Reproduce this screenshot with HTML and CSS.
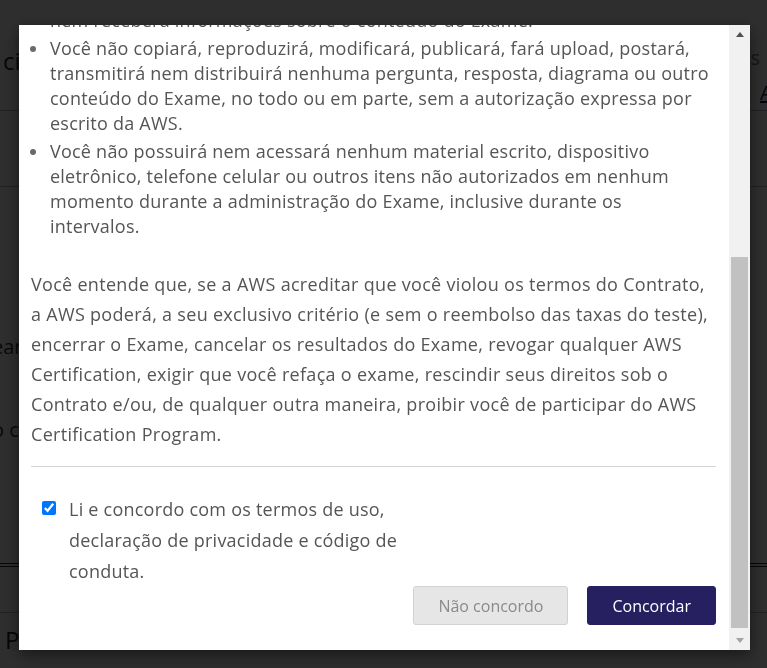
FILE: index.html
```html
<!DOCTYPE html>
<html lang="pt-BR">
<head>
<meta charset="utf-8">
<title>Termos do Exame</title>
<link rel="stylesheet" href="styles.css">
</head>
<body>
<div class="page">
  <header class="page-head">
    <div class="page-title">ciência do exame</div>
    <div class="page-nav">
      <span class="nav-item">Opções</span>
      <a class="nav-link">Ajuda</a>
    </div>
  </header>
  <section class="page-sec sec-a"></section>
  <section class="page-sec sec-b"></section>
  <section class="page-body">
    <p class="bg-line">earlier</p>
    <p class="bg-line">o candidato</p>
  </section>
  <section class="page-rule"></section>
  <footer class="page-foot">Política</footer>
</div>

<div class="backdrop"></div>

<div class="modal" role="dialog">
  <div class="modal-scroll">
    <div class="modal-inner">
      <h4 class="modal-title">Acordo de Confidencialidade do Exame</h4>
      <p class="intro">Antes de iniciar o exame, leia com atenção e aceite os termos a seguir. Ao fazer este exame, você concorda que:</p>
      <ul class="terms">
        <li>Você manterá a confidencialidade do conteúdo do Exame e não buscará<br>nem receberá informações sobre o conteúdo do Exame.</li>
        <li>Você não copiará, reproduzirá, modificará, publicará, fará upload, postará, transmitirá nem distribuirá nenhuma pergunta, resposta, diagrama ou outro conteúdo do Exame, no todo ou em parte, sem a autorização expressa por escrito da AWS.</li>
        <li>Você não possuirá nem acessará nenhum material escrito, dispositivo eletrônico, telefone celular ou outros itens não autorizados em nenhum momento durante a administração do Exame, inclusive durante os intervalos.</li>
      </ul>
      <p class="notice">Você entende que, se a AWS acreditar que você violou os termos do Contrato, a AWS poderá, a seu exclusivo critério (e sem o reembolso das taxas do teste), encerrar o Exame, cancelar os resultados do Exame, revogar qualquer AWS Certification, exigir que você refaça o exame, rescindir seus direitos sob o Contrato e/ou, de qualquer outra maneira, proibir você de participar do AWS Certification Program.</p>
      <hr class="divider">
      <label class="agree">
        <input type="checkbox" class="agree-box" checked>
        <span class="agree-text">Li e concordo com os termos de uso, declaração de privacidade e código de conduta.</span>
      </label>
      <div class="actions">
        <button class="btn btn-light" type="button">Não concordo</button>
        <button class="btn btn-primary" type="button">Concordar</button>
      </div>
    </div>
  </div>
  <div class="scrollbar" aria-hidden="true">
    <div class="sb-btn"><span class="sb-arrow sb-up"></span></div>
    <div class="sb-track"><div class="sb-thumb"></div></div>
    <div class="sb-btn"><span class="sb-arrow sb-down"></span></div>
  </div>
</div>
</body>
</html>
```
FILE: styles.css
```css
* { box-sizing: border-box; }
html, body { margin: 0; padding: 0; }
body {
  width: 767px;
  height: 668px;
  overflow: hidden;
  font-family: "Open Sans", "Noto Sans", sans-serif;
  background: #fff;
  color: #333;
}

/* ---------- page underneath ---------- */
.page { width: 767px; height: 668px; overflow: hidden; }
.page-head {
  height: 111px;
  border-bottom: 1px solid #bbb;
  display: flex;
  justify-content: space-between;
}
.page-title {
  padding: 44px 0 0 3px;
  font-size: 24px;
  color: #222;
  white-space: nowrap;
}
.page-nav {
  width: 110px;
  display: flex;
  flex-direction: column;
}
.nav-item {
  padding-top: 44px;
  padding-right: 7px;
  text-align: right;
  font-size: 20px;
  color: #777;
}
.nav-link {
  padding-left: 103px;
  padding-top: 8px;
  font-size: 20px;
  color: #1a1a5a;
  text-decoration: underline;
  white-space: nowrap;
  overflow: hidden;
}
.page-sec { border-bottom: 1px solid #bbb; }
.sec-a { height: 76px; }
.sec-b { height: 50px; border-bottom: 0; }
.page-body { height: 326px; padding-top: 96px; }
.bg-line {
  margin: 0 0 56px -8px;
  font-size: 20px;
  color: #333;
  white-space: nowrap;
}
.page-rule {
  height: 50px;
  border-top: 4px double #222;
  border-bottom: 1px solid #bbb;
}
.page-foot {
  padding: 10px 0 0 5px;
  font-size: 24px;
  color: #222;
}

.backdrop {
  position: fixed;
  inset: 0;
  background: rgba(0, 0, 0, 0.82);
}

/* ---------- modal ---------- */
.modal {
  position: fixed;
  left: 19px;
  top: 25px;
  width: 731px;
  height: 625px;
  background: #fff;
  box-shadow: 0 5px 15px rgba(0, 0, 0, 0.5);
  display: flex;
  color: #555;
  font-size: 18px;
  letter-spacing: 0.23px;
}
.modal-scroll {
  flex: 1;
  min-width: 0;
  overflow: hidden;
  display: flex;
  flex-direction: column-reverse;
}
.modal-inner {
  flex: none;
  padding: 20px 13px 25px 12px;
  display: flex;
  flex-direction: column;
}

/* fake scrollbar */
.scrollbar {
  width: 21px;
  flex: none;
  display: flex;
  flex-direction: column;
  background: #f1f1f1;
}
.sb-btn {
  height: 21px;
  flex: none;
  display: flex;
  align-items: center;
  justify-content: center;
}
.sb-arrow {
  width: 0;
  height: 0;
  border-left: 4.5px solid transparent;
  border-right: 4.5px solid transparent;
}
.sb-up { border-bottom: 5px solid #505050; margin-top: -2px; }
.sb-down { border-top: 5px solid #a3a3a3; margin-top: 2px; }
.sb-track {
  flex: 1;
  display: flex;
  flex-direction: column;
  justify-content: flex-end;
  padding: 0 2px 1px;
}
.sb-thumb {
  height: 371px;
  background: #c1c1c1;
}

.modal-title {
  margin: 0 0 16px;
  font-size: 22px;
  font-weight: 600;
  color: #333;
}
.intro {
  margin: 0 0 8px;
  line-height: 30px;
}
.terms {
  margin: 0;
  padding-left: 19px;
  line-height: 25px;
  list-style: none;
}
.terms li::before {
  content: "";
  display: inline-block;
  width: 6px;
  height: 6px;
  border-radius: 50%;
  background: #6a6a6a;
  margin-left: -20px;
  margin-right: 14px;
  vertical-align: 3px;
}
.terms li + li { margin-top: 3px; }
.notice {
  margin: 30px 0 0;
  line-height: 30px;
  letter-spacing: 0.3px;
}
.divider {
  width: 100%;
  margin: 17px 0 0;
  border: 0;
  border-top: 1px solid #d5d5d5;
}
.agree {
  margin-top: 27px;
  display: flex;
  align-items: flex-start;
  gap: 13px;
  padding-left: 11px;
}
.agree-box {
  margin: 7px 0 0;
  width: 14px;
  height: 14px;
  flex: none;
}
.agree-text {
  width: 345px;
  line-height: 31px;
}
.actions {
  margin-top: -1px;
  display: flex;
  justify-content: flex-end;
  gap: 19px;
}
.btn {
  height: 39px;
  padding: 0 24px;
  font-family: inherit;
  font-size: 16px;
  border-radius: 3px;
  cursor: pointer;
}
.btn-light {
  background: #e6e6e6;
  border: 1px solid #d2d2d2;
  color: #8a8a8a;
}
.btn-primary {
  background: #261f60;
  border: 1px solid #261f60;
  color: #fff;
}
```
